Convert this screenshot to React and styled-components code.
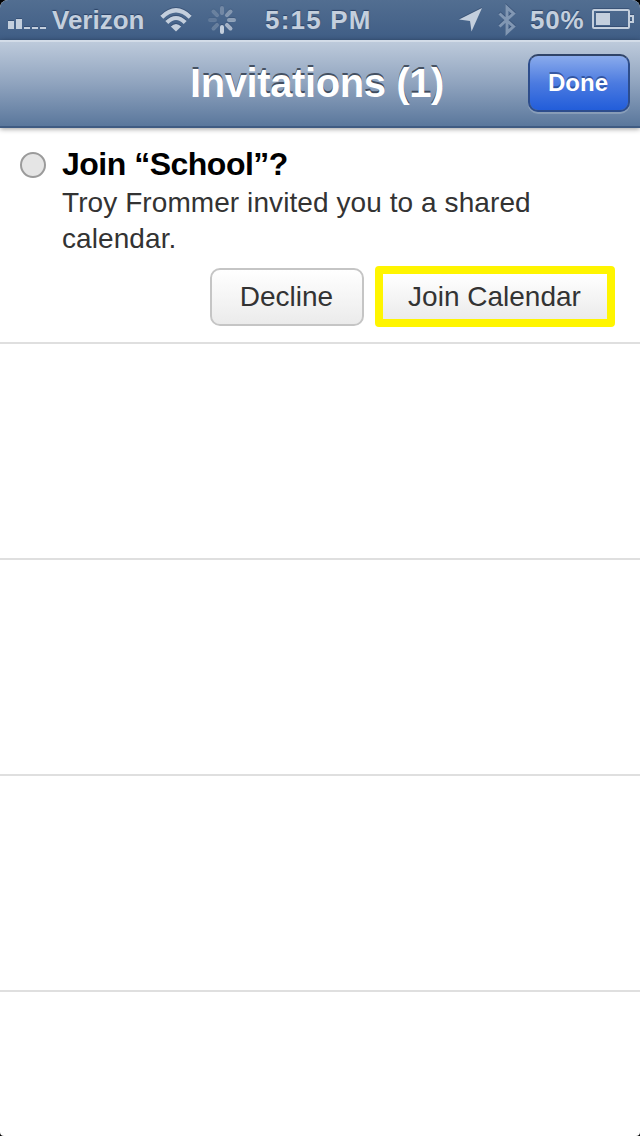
import React from 'react';
import styled, { createGlobalStyle } from 'styled-components';

const GlobalStyle = createGlobalStyle`
  * {
    box-sizing: border-box;
  }

  body {
    margin: 0;
    background: #000;
    font-family: 'Liberation Sans', Arial, sans-serif;
  }

  button {
    font-family: inherit;
  }
`;

const Screen = styled.div`
  width: 640px;
  height: 1136px;
  display: flex;
  flex-direction: column;
  overflow: hidden;
  border-radius: 8px 8px 4px 4px;
  background: #fff;
`;

const StatusBar = styled.header`
  height: 40px;
  flex: none;
  display: flex;
  align-items: center;
  padding: 0 5px 0 8px;
  background: linear-gradient(#526e91, #3f5d85);
  color: #c4cfdd;
  font-size: 26px;
  font-weight: bold;
  line-height: 40px;
  text-shadow: 0 -1px 1px rgba(20, 40, 75, 0.6);

  svg {
    display: block;
    flex: none;
    overflow: visible;
  }
`;

const StatusText = styled.span`
  width: ${({ $width }) => $width}px;
  margin-left: ${({ $gap }) => $gap}px;
  letter-spacing: ${({ $spacing = 0 }) => $spacing}px;
  white-space: nowrap;
`;

const Icon = styled.svg`
  margin-left: ${({ $gap = 0 }) => $gap}px;
  filter: drop-shadow(0 -1px 0 rgba(30, 50, 85, 0.4));
`;

const SignalIcon = styled(Icon)`
  align-self: flex-end;
  margin-bottom: 11px;
`;

const NavBar = styled.nav`
  height: 88px;
  flex: none;
  display: flex;
  align-items: center;
  padding: 0 10px 2px 106px;
  border-top: 2px solid #d3dce8;
  border-bottom: 2px solid #3f5b82;
  background: linear-gradient(#bdcadb, #8fa3be 50%, #5a779c);
  box-shadow: 0 1px 5px rgba(0, 0, 0, 0.4);
  z-index: 1;
`;

const Title = styled.h1`
  flex: 1;
  margin: 0;
  color: #fff;
  font-size: 40px;
  line-height: 48px;
  letter-spacing: -0.4px;
  text-align: center;
  text-shadow: 0 -2px 0 rgba(40, 50, 65, 0.75);
`;

const DoneButton = styled.button`
  width: 102px;
  height: 58px;
  padding: 0 2px 0 0;
  border: 2px solid #2d4d8c;
  border-top-color: #304468;
  border-radius: 10px;
  background: linear-gradient(#8aabec, #4c7be0 50%, #225dda) padding-box;
  box-shadow: 0 2px 0 rgba(255, 255, 255, 0.2);
  color: #fff;
  font-size: 24px;
  font-weight: bold;
  text-shadow: 0 -2px 0 rgba(25, 55, 120, 0.6);
`;

const List = styled.ul`
  margin: 0;
  padding: 0;
  list-style: none;
`;

const Row = styled.li`
  height: 216px;
  display: flex;
  border-bottom: ${({ $last }) => ($last ? 'none' : '2px solid #dfdfdf')};
`;

const StatusDot = styled.span`
  width: 26px;
  height: 26px;
  flex: none;
  margin: 24px 16px 0 20px;
  border: 2px solid #9b9b9b;
  border-radius: 50%;
  background: #e5e5e5;
`;

const Invitation = styled.div`
  flex: 1;
  padding: 16px 25px 0 0;
`;

const InviteTitle = styled.h2`
  margin: 0;
  color: #000;
  font-size: 32px;
  line-height: 40px;
  letter-spacing: -0.5px;
`;

const Message = styled.p`
  width: 500px;
  margin: 1px 0 0;
  color: #333;
  font-size: 28px;
  line-height: 36px;
  letter-spacing: 0.08px;
`;

const Actions = styled.div`
  display: flex;
  align-items: center;
  justify-content: flex-end;
  gap: 11px;
  margin-top: 9px;
`;

const ActionButton = styled.button`
  width: ${({ $highlighted }) => ($highlighted ? 240 : 154)}px;
  height: ${({ $highlighted }) => ($highlighted ? 61 : 58)}px;
  padding: 0 1px 0 0;
  border: ${({ $highlighted }) => ($highlighted ? '8px solid #fff500' : '2px solid #c5c5c5')};
  border-radius: ${({ $highlighted }) => ($highlighted ? 4 : 10)}px;
  background: linear-gradient(#fff, #ebebeb) padding-box;
  color: #333;
  font-size: 28px;
  line-height: 32px;
`;

const Signal = () => (
  <SignalIcon width="38" height="10" viewBox="0 0 38 10" fill="currentColor">
    <path d="M0 2h6v8H0zM8 0h6v10H8zM16 8h6v2h-6zM24 8h6v2h-6zM32 8h6v2h-6z" />
  </SignalIcon>
);

const Wifi = () => (
  <Icon $gap={15} width="32" height="24" viewBox="0 0 32 24" fill="none" stroke="currentColor">
    <path d="M1.8 9.2Q16-4.6 30.2 9.2" strokeWidth="4.2" />
    <path d="M6.8 14.6Q16 5.4 25.2 14.6" strokeWidth="4.2" />
    <path d="M10.8 18.4Q16 13.4 21.2 18.4L16 23.6z" fill="currentColor" stroke="none" />
  </Icon>
);

// petals run clockwise from the top
const petals = [0.36, 0.5, 0.6, 0.78, 1, 0.3, 0.22, 0.28];

const Spinner = () => (
  <Icon $gap={16} width="28" height="28" viewBox="0 0 28 28" stroke="currentColor">
    {petals.map((opacity, i) => (
      <path
        key={i}
        d="M14 2v5"
        strokeWidth="4"
        strokeLinecap="round"
        opacity={opacity}
        transform={`rotate(${i * 45} 14 14)`}
      />
    ))}
  </Icon>
);

const Location = () => (
  <Icon $gap={86} width="23" height="24" viewBox="0 0 23 24" fill="currentColor">
    <path d="M23 0L12.5 23.5l-1.5-10.5L0 11.5z" />
  </Icon>
);

const Bluetooth = () => (
  <Icon $gap={16} width="18" height="30" viewBox="0 0 18 30" fill="none" stroke="#8197b3">
    <path d="M1.5 8.5l14 13-6.5 6v-25l6.5 6-14 13" strokeWidth="3" />
  </Icon>
);

const Battery = () => (
  <Icon width="42" height="20" viewBox="0 0 42 20" fill="none" stroke="currentColor">
    <rect x="1" y="0" width="36" height="18" rx="1" strokeWidth="2" />
    <path d="M38 6h3v6h-3" strokeWidth="2" />
    <path d="M4 3h14v12H4z" fill="currentColor" stroke="none" />
  </Icon>
);

const emptyRows = [1, 2, 3, 4];

const App = () => (
  <>
    <GlobalStyle />
    <Screen>
      <StatusBar>
        <Signal />
        <StatusText $width={93} $gap={6}>
          Verizon
        </StatusText>
        <Wifi />
        <Spinner />
        <StatusText $width={108} $gap={29} $spacing={1.2}>
          5:15 PM
        </StatusText>
        <Location />
        <Bluetooth />
        <StatusText $width={62} $gap={14} $spacing={0.8}>
          50%
        </StatusText>
        <Battery />
      </StatusBar>

      <NavBar>
        <Title>Invitations (1)</Title>
        <DoneButton>Done</DoneButton>
      </NavBar>

      <List>
        <Row>
          <StatusDot />
          <Invitation>
            <InviteTitle>Join “School”?</InviteTitle>
            <Message>Troy Frommer invited you to a shared calendar.</Message>
            <Actions>
              <ActionButton>Decline</ActionButton>
              <ActionButton $highlighted>Join Calendar</ActionButton>
            </Actions>
          </Invitation>
        </Row>
        {emptyRows.map(row => (
          <Row key={row} $last={row === emptyRows.length} />
        ))}
      </List>
    </Screen>
  </>
);

export default App;
